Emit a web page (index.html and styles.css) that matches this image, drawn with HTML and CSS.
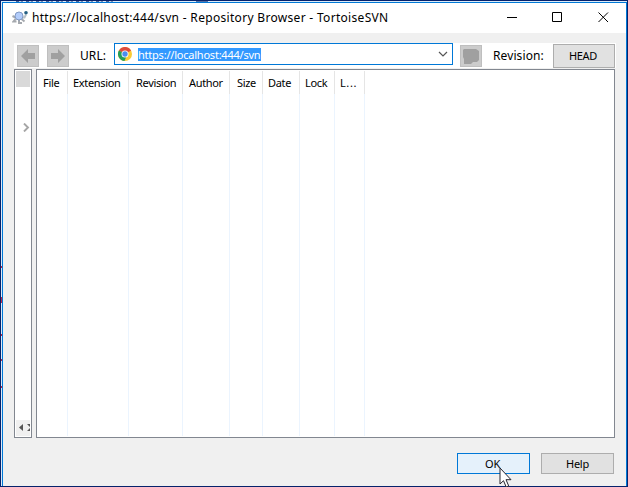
FILE: index.html
```html
<!DOCTYPE html>
<html lang="en">
<head>
<meta charset="utf-8">
<title>Repository Browser</title>
<link rel="stylesheet" href="styles.css">
</head>
<body>
<div class="desktop">
<div class="window">
  <header class="titlebar">
    <svg class="app-icon" width="17" height="15" viewBox="0 0 17 15">
      <path d="M.500 6l3 1.500M3.500 9l-2 2.500h3M7 10v3h3M9.500 9l3 2.500" fill="none" stroke="#a5a9ae" stroke-width="2"/>
      <path d="M10.500 7.500h2l1.500-3" fill="none" stroke="#b9c1c8" stroke-width="2"/>
      <circle cx="7" cy="6" r="4" fill="#b3cdfb" stroke="#8099c4"/>
      <circle cx="14" cy="2.800" r="1.800" fill="#245f83"/>
    </svg>
    <h1 class="title">https://localhost:444/svn - Repository Browser - TortoiseSVN</h1>
    <svg class="controls" width="104" height="12" viewBox="0 0 104 12" fill="none" stroke="#000">
      <path d="M0 6.500h10M45.500 1.500h9v9h-9zM91.500 1.500l9.500 9.500M101 1.500l-9.500 9.500"/>
    </svg>
  </header>
  <div class="toolbar">
    <div class="tool back"><svg width="22" height="22" viewBox="0 0 22 22"><path d="M4 11l7-7v4h7v6h-7v4z" fill="#a0a0a0"/></svg></div>
    <div class="tool forward"><svg width="22" height="22" viewBox="0 0 22 22"><path d="M18 11l-7-7v4H4v6h7v4z" fill="#a0a0a0"/></svg></div>
    <span class="label url-label">URL:</span>
    <div class="combo">
      <svg width="14" height="14" viewBox="0 0 14 14">
        <circle cx="7" cy="7" r="7" fill="#f9cb35"/>
        <path d="M7 7L.9 3.500A7 7 0 0 1 13.100 3.500z" fill="#dd4b3e"/>
        <path d="M7 7L.9 3.500A7 7 0 0 0 6.500 14L9 8z" fill="#249e5b"/>
        <circle cx="7" cy="7" r="3.500" fill="#fff"/>
        <circle cx="7" cy="7" r="2.700" fill="#4b8cf0"/>
      </svg>
      <span class="selection">https://localhost:444/svn</span>
      <svg class="chevron" width="10" height="6" viewBox="0 0 10 6"><path d="M1 1l4 4 4-4" fill="none" stroke="#555" stroke-width="1.200"/></svg>
    </div>
    <div class="tool stop"><svg width="22" height="22" viewBox="0 0 22 22"><path d="M4 4h12l3 2v9l-2 2h-4l-2 2H4V14L3 12V5z" fill="#a0a0a0"/></svg></div>
    <span class="label revision-label">Revision:</span>
    <button class="button head"><span>HEAD</span></button>
  </div>
  <main class="panes">
    <aside class="tree">
      <div class="thumb"></div>
      <svg class="expand" width="7" height="9" viewBox="0 0 7 9"><path d="M1 .5l4 4-4 4" fill="none" stroke="#a6a6a6" stroke-width="1.900"/></svg>
      <div class="scroll"><svg width="14" height="15" viewBox="0 0 14 15"><path d="M7 4v7L3 7.500z" fill="#555"/><path d="M11 4h3v3zM11 11h3V8z" fill="#555"/></svg></div>
    </aside>
    <section class="list">
      <div class="col file"><span>File</span></div>
      <div class="col extension"><span>Extension</span></div>
      <div class="col revision"><span>Revision</span></div>
      <div class="col author"><span>Author</span></div>
      <div class="col size"><span>Size</span></div>
      <div class="col date"><span>Date</span></div>
      <div class="col lock"><span>Lock</span></div>
      <div class="col more"><span>L...</span></div>
    </section>
  </main>
  <footer class="actions">
    <button class="button ok"><span>OK</span>
      <svg class="cursor" width="13" height="21" viewBox="0 0 13 21"><path d="M1 1v16l3.500-3.300 2.700 6.300 2.500-1.100L7 12.700h5z" fill="#fff" stroke="#26242e"/></svg>
    </button>
    <button class="button help"><span>Help</span></button>
  </footer>
</div>
</div>
</body>
</html>
```
FILE: styles.css
```css
* { box-sizing: border-box; }
body { margin: 0; font: 11px/16px "Noto Sans", sans-serif; color: #000; }
svg { display: block; flex: none; }
.desktop {
  width: 628px; height: 487px; padding: 1px 0 0 1px;
  border: 1px solid #06226b;
  /* slivers of the window behind, along the top and left edges */
  background:
    repeating-linear-gradient(90deg, #4b5f92 0 3px, #c5d3e8 3px 5px, #7d8fb5 5px 7px, #dceaf8 7px 10px) 15px 0 / 98px 1px no-repeat,
    linear-gradient(#5770a4, #5770a4) 195px 0 / 12px 1px no-repeat,
    linear-gradient(#c22545, #c22545) 0 265px / 1px 2px no-repeat,
    linear-gradient(#c22545, #c22545) 0 296px / 1px 6px no-repeat,
    linear-gradient(#c22545, #c22545) 0 333px / 1px 2px no-repeat,
    linear-gradient(#c22545, #c22545) 0 358px / 1px 2px no-repeat,
    linear-gradient(#c22545, #c22545) 0 385px / 1px 2px no-repeat,
    #dceaf8;
}
.window {
  width: 625px; height: 484px;
  border: 1px solid #0078d7; border-bottom: 0;
  background: #f0f0f0;
}
.titlebar { display: flex; align-items: center; height: 30px; padding: 0 15px 2px 9px; background: #fff; }
.title { margin: 1px 0 0 3px; font-size: 12px; font-weight: 400; white-space: nowrap; letter-spacing: .31px; }
.controls { margin-left: auto; }
.toolbar { display: flex; margin: 10px 0 0 11px; width: 602px; height: 25px; background: #fff; padding-left: 3px; }
.tool { width: 22px; height: 22px; margin-top: 2px; background: #ccc; box-shadow: inset 0 0 0 1px #bfbfbf; flex: none; }
.forward { margin-left: 8px; }
.label { font-size: 12px; margin-top: 5px; white-space: nowrap; flex: none; letter-spacing: .1px; }
.url-label { margin-left: 11px; width: 34px; }
.combo {
  display: flex; align-items: center; width: 339px; height: 22px; flex: none;
  padding: 0 4px 0 3px; border: 1px solid #0078d7; background: #fff;
}
.selection { margin-left: 6px; height: 13px; line-height: 13px; width: 123px; background: #3399ff; color: #fff; white-space: nowrap; letter-spacing: -.22px; }
.chevron { margin-left: auto; }
.stop { margin-left: 7px; }
.revision-label { margin-left: 11px; width: 60px; }
.button {
  display: flex; align-items: center; justify-content: center; position: relative;
  height: 21px; padding: 0 2px 0 0; border: 1px solid #adadad; background: #e1e1e1;
  font: inherit; letter-spacing: -.3px; color: #000;
}
.head { width: 62px; height: 24px; margin-top: 1px; }
.panes { display: flex; gap: 4px; margin: 1px 0 0 11px; height: 369px; }
.tree { display: flex; flex-direction: column; width: 18px; border: 1px solid #828790; padding: 1px; background: #fff; }
.thumb { height: 16px; width: 14px; background: #d9d9d9; }
.expand { margin: 36px 0 0 7px; }
.scroll { margin-top: auto; background: #f0f0f0; width: 14px; height: 16px; }
.list { display: flex; width: 579px; border: 1px solid #828790; background: #fff; padding: 1px; }
.col {
  padding-top: 4px; white-space: nowrap; letter-spacing: -.33px; flex: none;
  border-right: 1px solid; border-image: linear-gradient(#e5e5e5 24px, #ebf4fe 24px) 1;
}
.file { width: 30px; padding-left: 5px; }
.extension { width: 61px; padding-left: 5px; }
.revision { width: 54px; padding-left: 7px; }
.author { width: 47px; padding-left: 6px; }
.size { width: 33px; padding-left: 7px; }
.date { width: 37px; padding-left: 5px; }
.lock { width: 35px; padding-left: 5px; }
.more { width: 30px; padding-left: 5px; letter-spacing: .6px; }
.actions { display: flex; justify-content: flex-end; gap: 11px; margin: 15px 12px 0 0; }
.ok, .help { width: 73px; }
.help { padding-right: 0; }
.ok { border-color: #0078d7; background: #e5f1fb; }
.cursor { position: absolute; left: 41px; top: 13px; z-index: 1; }
```
